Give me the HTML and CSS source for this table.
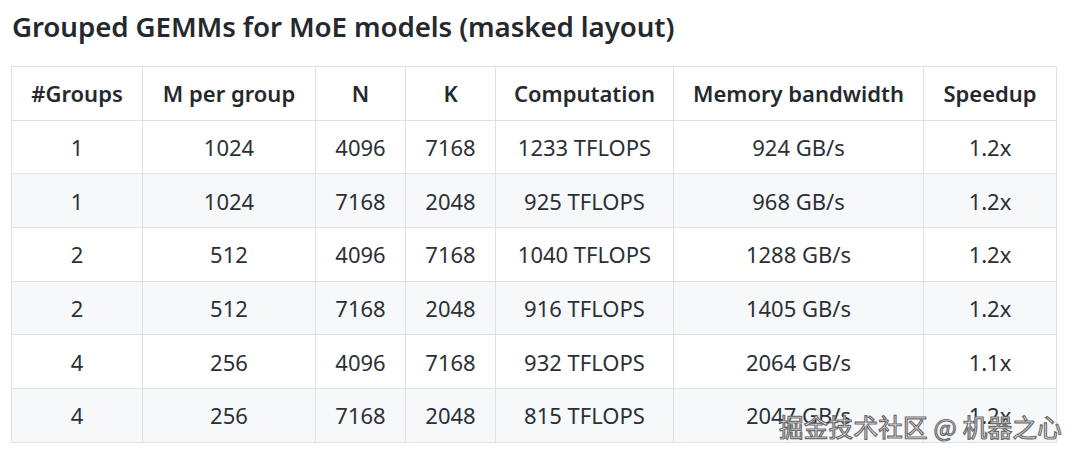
FILE: index.html
```html
<!DOCTYPE html>
<html lang="en">
<head>
  <meta charset="UTF-8">
  <title>Grouped GEMMs for MoE models</title>
  <link rel="stylesheet" href="styles.css">
</head>
<body>
  <div class="page">
    <h2>Grouped GEMMs for MoE models (masked layout)</h2>
    <table>
      <colgroup>
        <col style="width:131px"><col style="width:173px"><col style="width:90px"><col style="width:90px">
        <col style="width:178px"><col style="width:250px"><col style="width:133px">
      </colgroup>
      <thead>
        <tr>
          <th>#Groups</th><th>M per group</th><th>N</th><th>K</th><th>Computation</th><th>Memory bandwidth</th><th>Speedup</th>
        </tr>
      </thead>
      <tbody>
        <tr><td>1</td><td>1024</td><td>4096</td><td>7168</td><td>1233 TFLOPS</td><td>924 GB/s</td><td>1.2x</td></tr>
        <tr><td>1</td><td>1024</td><td>7168</td><td>2048</td><td>925 TFLOPS</td><td>968 GB/s</td><td>1.2x</td></tr>
        <tr><td>2</td><td>512</td><td>4096</td><td>7168</td><td>1040 TFLOPS</td><td>1288 GB/s</td><td>1.2x</td></tr>
        <tr><td>2</td><td>512</td><td>7168</td><td>2048</td><td>916 TFLOPS</td><td>1405 GB/s</td><td>1.2x</td></tr>
        <tr><td>4</td><td>256</td><td>4096</td><td>7168</td><td>932 TFLOPS</td><td>2064 GB/s</td><td>1.1x</td></tr>
        <tr><td>4</td><td>256</td><td>7168</td><td>2048</td><td>815 TFLOPS</td><td>2047 GB/s</td><td>1.2x</td></tr>
      </tbody>
    </table>
    <div class="watermark">掘金技术社区 @ 机器之心</div>
  </div>
</body>
</html>
```

FILE: styles.css
```css
body {
  margin: 0;
  background-color: #fff;
  font-family: "Noto Sans", "Open Sans", sans-serif;
  color: #24292e;
}
.page {
  position: relative;
  padding: 6px 0 0 11px;
  height: 451px;
}
h2 {
  margin: 0 0 20px 1px;
  font-size: 27.7px;
  font-weight: 600;
  line-height: 40px;
  letter-spacing: -0.1px;
}
table {
  border-collapse: collapse;
  table-layout: fixed;
  width: 1045px;
  font-size: 22px;
}
th, td {
  border: 1px solid #dfe2e5;
  text-align: center;
  height: 52.7px;
  padding: 0;
}
th {
  font-weight: 600;
}
td {
  font-weight: 400;
  color: #2b3036;
}
tbody tr:nth-child(even) {
  background-color: #f6f8fa;
}
.watermark {
  position: absolute;
  left: 779px;
  top: 409px;
  font-family: "Noto Sans CJK SC", sans-serif;
  font-size: 24.5px;
  color: #fff;
  -webkit-text-stroke: 1.2px #6f6f6f;
  letter-spacing: 0.3px;
}
```
